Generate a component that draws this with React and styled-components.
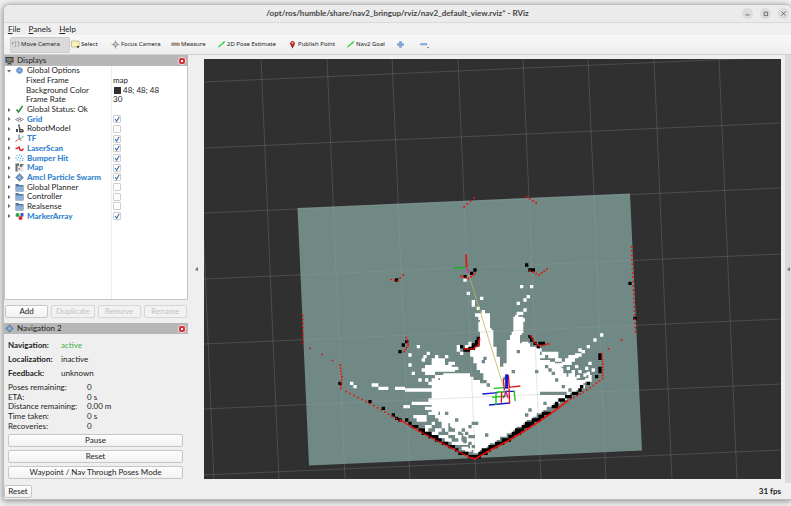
import { useState } from "react";
import styled, { createGlobalStyle } from "styled-components";

const GlobalStyle = createGlobalStyle`
  * {
    box-sizing: border-box;
  }

  body {
    margin: 0;
    background: #f1f1f1;
    color: #222;
    font-family: Lato, "Noto Sans", sans-serif;
    font-size: 8px;
    line-height: 9px;
  }

  button, input {
    font: inherit;
    color: inherit;
    margin: 0;
  }
`;

const TOOLS = [
  { icon: "move", label: "Move Camera", width: 60, active: true },
  { icon: "select", label: "Select", width: 40 },
  { icon: "focus", label: "Focus Camera", width: 60 },
  { icon: "measure", label: "Measure", width: 46 },
  { icon: "arrow", label: "2D Pose Estimate", width: 71 },
  { icon: "pin", label: "Publish Point", width: 58 },
  { icon: "arrow", label: "Nav2 Goal", width: 50 },
  { icon: "plus", title: "Add tool", width: 24 },
  { icon: "minus", title: "Remove tool", width: 20 },
];

const TREE = [
  { icon: "gear", label: "Global Options", open: true },
  { label: "Fixed Frame", value: "map" },
  { label: "Background Color", value: "48; 48; 48", swatch: true },
  { label: "Frame Rate", value: "30" },
  { icon: "ok", label: "Global Status: Ok" },
  { icon: "grid", label: "Grid", checked: true },
  { icon: "robot", label: "RobotModel", checked: false },
  { icon: "tf", label: "TF", checked: true },
  { icon: "laser", label: "LaserScan", checked: true },
  { icon: "cloud", label: "Bumper Hit", checked: true },
  { icon: "map", label: "Map", checked: true },
  { icon: "diamond", label: "Amcl Particle Swarm", checked: true },
  { icon: "folder", label: "Global Planner", checked: false },
  { icon: "folder", label: "Controller", checked: false },
  { icon: "folder", label: "Realsense", checked: false },
  { icon: "markers", label: "MarkerArray", checked: true },
];

const INFO = [
  ["Poses remaining:", "0"],
  ["ETA:", "0 s"],
  ["Distance remaining:", "0.00 m"],
  ["Time taken:", "0 s"],
  ["Recoveries:", "0"],
];

const ICONS = {
  move: (
    <g fill="none" stroke="#8d8d8d">
      <path d="M9 3v11M6.500 5.500L9 3l2.500 2.500M6.500 11.500L9 14l2.500-2.500" />
      <path d="M3 4v5M1 6h4M13 4h3v6l-2 4" strokeWidth="1.500" />
    </g>
  ),
  select: (
    <g>
      <path d="M1 2h15v12H1z" fill="#fbf3b0" stroke="#96906a" />
      <path d="M11 12l6 0-3 5z" fill="#333" />
    </g>
  ),
  focus: (
    <g fill="none" stroke="#8a8a8a" strokeWidth="1.500">
      <circle cx="9" cy="9" r="4" fill="#c7c7c7" />
      <path d="M9 1v5M9 12v5M1 9h5M12 9h5" />
    </g>
  ),
  measure: (
    <g>
      <path d="M1 6h16v5H1z" fill="#bda48e" stroke="#8b7a6c" />
      <path d="M4 6v2M7 6v3M10 6v2M13 6v3" stroke="#6f6258" />
    </g>
  ),
  arrow: <path d="M2 16L4 11 11 6 11 4 17 2 14 7 12 8 6 13z" fill="#27d43b" />,
  pin: (
    <g>
      <path d="M9 17L5 10A5 5 0 1 1 13 10z" fill="#b5302a" />
      <path d="M8 12h2l-1 5z" fill="#4c2422" />
      <circle cx="9" cy="6" r="2" fill="#f1a6a0" />
    </g>
  ),
  plus: <path d="M7 3h4v4h4v4h-4v4H7v-4H3V7h4z" fill="#7ea7d8" stroke="#6690c4" />,
  minus: (
    <g>
      <path d="M1 7h13v3H1z" fill="#86addb" stroke="#6f9bcc" />
      <path d="M14 14h4l-2 3z" fill="#555" />
    </g>
  ),
  screen: (
    <g>
      <path d="M1 2h16v11H1z" fill="#353a40" />
      <path d="M3 4h4v7H3z" fill="#5f86bb" />
      <path d="M7 4h4v7H7z" fill="#69b06c" />
      <path d="M11 4h4v7h-4z" fill="#c16363" />
      <path d="M6 14h6l2 3H4z" fill="#4a4a4a" />
    </g>
  ),
  gear: (
    <g>
      <circle cx="9" cy="9" r="6" fill="#6d9bd0" stroke="#6c98cb" strokeWidth="2" strokeDasharray="2 1" />
      <circle cx="9" cy="9" r="2" fill="#a9c5e6" />
    </g>
  ),
  ok: <path d="M3 9l4 5 8-12" fill="none" stroke="#23883a" strokeWidth="3" />,
  grid: (
    <g fill="none" stroke="#777" strokeWidth="1.500">
      <path d="M1 9l8-4 8 4-8 4zM5 7l8 4M13 7l-8 4" />
    </g>
  ),
  robot: (
    <g fill="#4b4b4b">
      <circle cx="8" cy="3" r="2" />
      <path d="M7 5h3l1 5h5l2 5-3 2H8V11zM2 10h4v6H2z" />
      <path d="M10 13h5" stroke="#ddd" />
    </g>
  ),
  tf: (
    <g fill="none" strokeWidth="2">
      <path d="M8 1v9" stroke="#4d62d8" />
      <path d="M1 15l6-5" stroke="#e04444" />
      <path d="M8 11l5-3 4-4" stroke="#37b556" />
      <path d="M9 11l4 2" stroke="#e04444" />
    </g>
  ),
  laser: <path d="M1 9h3l4-3 2 6 4 1 3-4" fill="none" stroke="#e0242a" strokeWidth="3" />,
  cloud: (
    <g fill="#55aef0">
      {[[4, 3], [9, 2], [13, 5], [2, 8], [7, 7], [11, 9], [5, 12], [10, 14], [15, 13], [16, 9]].map(([x, y]) => (
        <circle key={`${x}-${y}`} cx={x} cy={y} r="1.300" />
      ))}
    </g>
  ),
  map: (
    <g>
      <path d="M1 1h16v16H1z" fill="#e6e6e6" />
      <path d="M1 1h7v5H5v11H1zM10 2h7v3h-3v3h-4z" fill="#707070" />
      <path d="M7 10h3v3H7z" fill="#888" />
    </g>
  ),
  diamond: (
    <g>
      <path d="M9 1l8 8-8 8-8-8z" fill="#7193bb" stroke="#55779d" />
      <path d="M9 6l3 3-3 3-3-3z" fill="#a6c0dc" />
    </g>
  ),
  folder: (
    <g>
      <path d="M1 2h6l1 2h9v13H1z" fill="#52789f" />
      <path d="M2 7h15v9H2z" fill="#8fb1d6" />
    </g>
  ),
  markers: (
    <g>
      <circle cx="5" cy="6" r="4" fill="#27a83a" />
      <path d="M11 2h6v7h-6z" fill="#3b55d0" />
      <circle cx="11" cy="12" r="4" fill="#d8262c" />
    </g>
  ),
};

function Icon({ name }) {
  return (
    <IconBox viewBox="0 0 18 18" aria-hidden="true">
      {ICONS[name]}
    </IconBox>
  );
}

/* Occupancy grid. Coordinates are thirds of a view unit, one cell is 10. */
const CELL = 10;

const FREE_AREAS = [
  [[470, 545], [540, 550], [560, 570], [590, 585], [615, 605], [640, 580], [660, 540], [680, 500], [695, 465], [725, 465], [745, 480], [755, 505], [790, 520], [810, 530], [830, 555], [880, 570], [880, 590], [850, 612], [800, 640], [750, 670], [700, 705], [640, 740], [560, 795], [545, 775], [520, 735], [490, 710], [455, 680], [435, 640], [435, 610], [440, 575]],
  [[565, 375], [600, 375], [608, 440], [618, 480], [630, 520], [642, 540], [642, 610], [610, 610], [595, 580], [570, 545], [548, 510], [532, 475], [570, 470], [572, 430]],
  [[672, 385], [698, 385], [695, 430], [690, 460], [682, 500], [672, 560], [640, 560], [648, 500], [652, 450], [665, 440]],
];

const FREE_RUNS = [
  // left fan
  [183, 580], [193, 588], [252, 585, 2], [272, 595, 3], [320, 593, 3], [350, 600, 9], [372, 640, 8],
  [343, 650, 2], [375, 680, 4], [385, 690, 3], [385, 470], [360, 495], [360, 525], [372, 550], [415, 490],
  [405, 500], [390, 570], [400, 510], [430, 510, 2], [440, 500], [470, 500], [400, 540, 4], [410, 550, 3],
  [420, 530, 4], [430, 520, 2], [450, 530, 3], [480, 520, 2], [470, 530, 2], [490, 535, 2], [440, 540, 3],
  [450, 520, 2], [410, 530, 2], [420, 580, 3], [430, 570, 2], [410, 570, 1], [430, 590, 2], [400, 600, 5],
  [420, 630, 3], [430, 620, 2], [440, 560, 3], [410, 655, 3], [430, 650, 3], [420, 670, 3], [440, 680, 3],
  [410, 710, 2], [430, 700, 1], [450, 690, 3], [400, 720, 2], [420, 730, 3], [440, 720, 2], [460, 710, 2],
  [480, 730, 3], [450, 740, 3], [470, 720, 1], [470, 750, 2], [500, 740, 2], [490, 760, 3], [520, 760, 2],
  [520, 775, 2], [510, 750, 1], [530, 780, 2], [500, 720, 2], [460, 700, 2], [490, 710, 3],
  [460, 510], [450, 510], [470, 540, 3], [430, 610, 2], [430, 660, 3],
  // beams
  [525, 270], [535, 308], [575, 325], [548, 335], [548, 343], [566, 355], [560, 375], [580, 365],
  [588, 375], [588, 382], [570, 385, 2], [570, 398, 2], [568, 410, 2], [570, 420, 3], [580, 430, 3], [580, 440, 3],
  [590, 420, 2], [505, 470], [505, 480], [515, 490], [530, 470, 2], [540, 460, 1],
  [695, 290], [723, 290], [715, 320], [706, 330], [686, 340], [706, 360], [686, 370, 2], [678, 380],
  [678, 390], [698, 390], [686, 400], [680, 410, 2], [678, 420, 2], [670, 430, 3], [665, 440, 3], [700, 460, 2],
  // right fan
  [935, 437], [915, 450], [895, 468], [870, 480], [880, 485], [860, 495, 2], [840, 500, 3], [830, 510, 3],
  [820, 520, 3], [805, 525, 2], [760, 490, 3], [780, 500, 3], [790, 490, 2], [740, 480, 2], [750, 500, 2],
  [815, 540], [835, 535], [860, 530], [850, 545], [870, 545], [890, 535], [840, 555, 2], [865, 560],
  [885, 555], [830, 565], [850, 575, 4], [895, 550], [870, 590, 2], [890, 570, 2], [900, 560], [780, 520, 2],
  [800, 510, 2], [790, 530, 3], [900, 520], [910, 540],
];

const UNKNOWN_RUNS = [
  [550, 700], [520, 720], [540, 710], [530, 730], [510, 730], [540, 740], [520, 745], [550, 740], [540, 760],
  [525, 755], [470, 670], [585, 505], [580, 515], [550, 770], [670, 545], [740, 545], [755, 610, 8], [800, 570],
  [790, 550], [765, 640], [720, 660], [710, 675], [770, 530], [780, 540], [590, 735], [500, 690],
  [560, 700], [820, 590], [840, 600],
];

const WALL_RUNS = [
  [320, 268], [148, 580], [238, 636], [278, 655], [310, 673], [320, 683], [330, 690], [348, 690], [348, 455],
  [338, 465], [330, 485], [526, 260], [545, 250], [555, 240], [711, 223], [720, 242, 2], [1018, 278], [1033, 385],
  [515, 468], [525, 478, 2], [540, 475, 2], [550, 465, 2], [560, 455], [563, 445], [721, 440], [725, 450],
  [735, 460], [750, 458, 2], [745, 468], [930, 495], [930, 505], [930, 535], [930, 545], [922, 558],
  [895, 578], [875, 590], [868, 600], [850, 612, 2], [830, 622, 2], [810, 632, 2], [800, 642], [790, 650, 2],
];

const LEFT_WALL = [[355, 700], [410, 730], [460, 758], [510, 785], [550, 800]];
const RIGHT_WALL = [[560, 798], [600, 772], [650, 745], [690, 718], [720, 697], [770, 665]];

const LASER_LINES = [
  { points: [[330, 690], [400, 730], [450, 757], [500, 782], [540, 802], [555, 806]], step: 6 },
  { points: [[555, 806], [600, 780], [650, 754], [700, 724], [750, 692], [800, 657], [830, 634]], step: 4 },
  { points: [[832, 632], [880, 606], [910, 586], [937, 565]], step: 11 },
  { points: [[937, 565], [938, 530], [935, 490]], step: 8 },
  { points: [[150, 525], [155, 560], [152, 595]], step: 9 },
  { points: [[168, 604], [240, 640], [295, 672], [330, 692]], step: 14 },
  { points: [[60, 475], [96, 493], [127, 511]], step: 36 },
  { points: [[38, 376], [39, 460]], step: 12 },
  { points: [[1024, 170], [1030, 300], [1036, 425]], step: 13 },
  { points: [[348, 442], [354, 465], [342, 484]], step: 8 },
  { points: [[303, 268], [322, 271], [339, 255]], step: 12 },
  { points: [[512, 258], [535, 265], [555, 250]], step: 9 },
  { points: [[522, 50], [551, 24]], step: 13 },
  { points: [[709, 20], [738, 39]], step: 13 },
  { points: [[720, 242], [747, 254], [770, 237]], step: 10 },
  { points: [[525, 477], [550, 476], [567, 462], [568, 445]], step: 6 },
  { points: [[722, 437], [732, 456], [748, 468], [775, 461]], step: 7 },
  { points: [[955, 476], [994, 450]], step: 46 },
];

function inside(x, y, polygon) {
  let hit = false;
  for (let i = 0, j = polygon.length - 1; i < polygon.length; j = i++) {
    const [xi, yi] = polygon[i];
    const [xj, yj] = polygon[j];
    if (yi > y !== yj > y && x < ((xj - xi) * (y - yi)) / (yj - yi) + xi) hit = !hit;
  }
  return hit;
}

function walk(points, step) {
  const out = [];
  for (let i = 1; i < points.length; i++) {
    const [x0, y0] = points[i - 1];
    const [x1, y1] = points[i];
    const count = Math.max(1, Math.round(Math.hypot(x1 - x0, y1 - y0) / step));
    for (let k = 0; k <= count; k++) {
      out.push([x0 + ((x1 - x0) * k) / count, y0 + ((y1 - y0) * k) / count]);
    }
  }
  return out;
}

const square = (x, y, w = CELL, h = CELL) => `M${x} ${y}h${w}v${h}h${-w}z`;

const runsPath = (runs) =>
  runs
    .map(([x, y, n = 1]) => square(Math.round(x / 5) * 5 - 5, Math.round(y / 5) * 5 - 5, n * CELL))
    .join("");

function areasPath(areas) {
  let d = "";
  for (let y = 370; y < 810; y += CELL) {
    for (let x = 380; x < 960; x += CELL) {
      if (areas.some((area) => inside(x + 5, y + 5, area))) d += square(x, y);
    }
  }
  return d;
}

const wallPath = (points, width) =>
  walk(points, 7)
    .map(([x, y]) => square(Math.round(x / CELL) * CELL - 5, Math.round(y / CELL) * CELL - 5, width))
    .join("");

const laserPath = LASER_LINES.map(({ points, step }) =>
  walk(points, step).map(([x, y]) => square(x - 2, y - 2, 5, 5)).join("")
).join("");

const freePath = areasPath(FREE_AREAS) + runsPath(FREE_RUNS);
const blackPath = runsPath(WALL_RUNS) + wallPath(LEFT_WALL, 10) + wallPath(RIGHT_WALL, 18);

const columns = [196, 261, 327, 392, 458, 523, 588, 654, 719, 785];
const rows = [82, 148, 213, 279, 344, 409, 475];

function Scene() {
  return (
    <View viewBox="204 58 577 422" preserveAspectRatio="xMidYMid slice" role="img" aria-label="3D view">
      <path d="M297.500 208L630 193.500 642 450.500 309 465.500z" fill="#708985" />
      <g transform="translate(290 190) scale(.33333)">
        <path d={freePath} fill="#fff" />
        <path d={runsPath(UNKNOWN_RUNS)} fill="#708985" />
      </g>
      <g stroke="#a0a0a4" strokeOpacity=".26" strokeWidth="1">
        {columns.map((x) => (
          <line key={x} x1={x} y1="58" x2={x + 18} y2="480" />
        ))}
        {rows.map((y) => (
          <line key={y} x1="204" y1={y} x2="781" y2={y - 25} />
        ))}
      </g>
      <g transform="translate(290 190) scale(.33333)">
        <path d={blackPath} fill="#000" />
        <path d={laserPath} fill="#e8100c" />
        <g fill="none" strokeWidth="4">
          <path d="M530 233L640 590" stroke="#c2b45c" strokeWidth="3" opacity=".8" />
          <path d="M490 234L528 232" stroke="#19b219" />
          <path d="M528 193L530 232" stroke="#dc1414" strokeWidth="5" />
          <path d="M530 234L536 250" stroke="#c832a0" strokeWidth="5" />
          <path d="M577 612L625 608M597 645L660 639M640 604H673" stroke="#1818d0" />
          <path d="M611 595L655 592M606 622L650 618M618 610V645M672 602L676 633M620 606H650" stroke="#12c512" />
          <path d="M640 566L643 600M655 555L658 592L691 588M635 605L634 638M657 595L659 640" stroke="#dd1515" />
          <path d="M650 553V596" stroke="#1717d6" strokeWidth="9" />
          <path d="M640 625L648 605 655 625" stroke="#c71b9a" />
        </g>
      </g>
    </View>
  );
}

function TreeRow({ item }) {
  const [checked, setChecked] = useState(item.checked);
  const toggle = item.checked !== undefined;
  return (
    <Row>
      <Name as={toggle ? "label" : "span"} htmlFor={toggle ? item.label : undefined} $on={checked}>
        <Expander $hidden={!item.icon} viewBox="0 0 8 8" aria-hidden="true">
          <path d={item.open ? "M0 2h8L4 7z" : "M2 0v8l5-4z"} fill="#666" />
        </Expander>
        {item.icon ? <Icon name={item.icon} /> : <Indent />}
        {item.label}
      </Name>
      <Value>
        {item.swatch && <Swatch />}
        {item.value}
        {toggle && (
          <Check id={item.label} type="checkbox" checked={checked} onChange={() => setChecked(!checked)} />
        )}
      </Value>
    </Row>
  );
}

export default function App() {
  return (
    <>
      <GlobalStyle />
      <Window>
        <TitleBar>
          <Title>/opt/ros/humble/share/nav2_bringup/rviz/nav2_default_view.rviz* - RViz</Title>
          <WindowButtons>
            <RoundButton aria-label="Minimize"><svg viewBox="0 0 10 10"><path d="M2 7h6" /></svg></RoundButton>
            <RoundButton aria-label="Maximize"><svg viewBox="0 0 10 10"><path d="M3 3h5v5H3z" /></svg></RoundButton>
            <RoundButton aria-label="Close"><svg viewBox="0 0 10 10"><path d="M2 2l6 6M8 2L2 8" /></svg></RoundButton>
          </WindowButtons>
        </TitleBar>
        <MenuBar>
          <MenuItem><u>F</u>ile</MenuItem>
          <MenuItem><u>P</u>anels</MenuItem>
          <MenuItem><u>H</u>elp</MenuItem>
        </MenuBar>
        <ToolBar>
          {TOOLS.map(({ icon, label, title, width, active }, i) => (
            <Tool key={i} $width={width} $active={active} aria-label={title}>
              <Icon name={icon} />
              {label}
            </Tool>
          ))}
        </ToolBar>
        <Body>
          <Dock>
            <PanelHeader>
              <Icon name="screen" />
              <PanelTitle>Displays</PanelTitle>
              <CloseButton aria-label="Close Displays" />
            </PanelHeader>
            <Tree>
              <Rows>
                {TREE.map((item) => (
                  <TreeRow key={item.label} item={item} />
                ))}
              </Rows>
            </Tree>
            <DisplayButtons>
              <Button>Add</Button>
              <Button disabled>Duplicate</Button>
              <Button disabled>Remove</Button>
              <Button disabled>Rename</Button>
            </DisplayButtons>
            <PanelHeader>
              <Icon name="diamond" />
              <PanelTitle>Navigation 2</PanelTitle>
              <CloseButton aria-label="Close Navigation 2" />
            </PanelHeader>
            <NavPanel>
              <Status>
                <dt>Navigation:</dt><Active>active</Active>
                <dt>Localization:</dt><dd>inactive</dd>
                <dt>Feedback:</dt><dd>unknown</dd>
              </Status>
              <Info>
                {INFO.map(([name, value]) => (
                  <InfoRow key={name}><dt>{name}</dt><dd>{value}</dd></InfoRow>
                ))}
              </Info>
              <Button>Pause</Button>
              <Button>Reset</Button>
              <Button>Waypoint / Nav Through Poses Mode</Button>
            </NavPanel>
          </Dock>
          <Splitter aria-label="Toggle left panels">
            <svg viewBox="0 0 4 6"><path d="M4 0v6L0 3z" /></svg>
          </Splitter>
          <Scene />
          <RightSplitter aria-label="Toggle right panels">
            <svg viewBox="0 0 4 6"><path d="M4 0v6L0 3z" /></svg>
          </RightSplitter>
        </Body>
        <StatusBar>
          <ResetButton>Reset</ResetButton>
          <Fps>31 fps</Fps>
        </StatusBar>
      </Window>
    </>
  );
}

const Window = styled.main`
  display: flex;
  flex-direction: column;
  height: calc(100vh - 10px);
  min-height: 440px;
  margin: 4px 0 6px 3px;
  background: #efefef;
  border: 1px solid #bdbdbd;
  border-right: 0;
  border-radius: 6px 6px 0 0;
  box-shadow: 0 1px 6px rgba(0, 0, 0, 0.45);
  overflow: hidden;
`;

const TitleBar = styled.header`
  display: grid;
  grid-template-columns: 52px 1fr 52px;
  align-items: center;
  height: 18px;
  flex: none;
  background: #ebebeb;
  border-bottom: 1px solid #d9d9d9;
`;

const Title = styled.h1`
  grid-column: 2;
  margin: 0;
  font-size: 8px;
  font-weight: 700;
  text-align: center;
  color: #444;
`;

const WindowButtons = styled.div`
  display: flex;
  justify-content: flex-end;
  gap: 7px;
  padding-right: 2px;
`;

const RoundButton = styled.button`
  display: grid;
  place-items: center;
  width: 11px;
  height: 11px;
  padding: 0;
  border: 0;
  border-radius: 50%;
  background: #dcdcdc;

  svg {
    width: 7px;
    fill: none;
    stroke: #444;
  }
`;

const MenuBar = styled.nav`
  display: flex;
  align-items: center;
  gap: 8px;
  height: 12px;
  flex: none;
  padding-left: 4px;
`;

const MenuItem = styled.button`
  padding: 0;
  border: 0;
  background: none;
  line-height: 10px;
`;

const ToolBar = styled.div`
  display: flex;
  align-items: center;
  height: 20px;
  flex: none;
  padding: 1px 0 1px 6px;
  background: linear-gradient(#f8f8f8, #eeeeee);
  border-bottom: 1px solid #cfcfcf;
`;

const IconBox = styled.svg`
  width: 9px;
  height: 9px;
  flex: none;
`;

const Tool = styled.button`
  display: flex;
  align-items: center;
  gap: 1px;
  width: ${(props) => props.$width}px;
  height: 16px;
  flex: none;
  padding: 0;
  border: 1px solid ${(props) => (props.$active ? "#cbcbcb" : "transparent")};
  border-radius: 2px;
  background: ${(props) => (props.$active ? "#dadada" : "none")};
  font-family: "Noto Sans", sans-serif;
  font-size: 6px;
  white-space: nowrap;
`;

const Body = styled.div`
  display: flex;
  flex: 1;
  min-height: 0;
`;

const Dock = styled.aside`
  display: flex;
  flex-direction: column;
  width: 184px;
  flex: none;
`;

const PanelHeader = styled.div`
  display: flex;
  align-items: center;
  gap: 3px;
  height: 11px;
  flex: none;
  padding: 0 2px 0 1px;
  background: #b7b7b7;
`;

const PanelTitle = styled.h2`
  flex: 1;
  margin: 0;
  font-size: 8px;
  font-weight: 400;
`;

const CloseButton = styled.button`
  display: grid;
  place-items: center;
  width: 8px;
  height: 8px;
  padding: 0;
  border: 1px solid #f3dada;
  border-radius: 3px;
  background: #d4303a;

  &::after {
    content: "";
    width: 2px;
    height: 2px;
    background: #fff;
  }
`;

const Tree = styled.div`
  flex: 1;
  min-height: 0;
  overflow: hidden;
  border: 1px solid #c4c4c4;
  border-top: 0;
  background: linear-gradient(90deg, #fff 106px, #eee 106px, #eee 107px, #fff 107px);
`;

const Rows = styled.div`
  display: grid;
  grid-auto-rows: 1fr;
  height: 155px;
`;

const Row = styled.div`
  display: grid;
  grid-template-columns: 107px 1fr;
  align-items: center;
  min-height: 0;
`;

const Name = styled.span`
  display: flex;
  align-items: center;
  gap: 3px;
  padding-left: 2px;
  font-weight: ${(props) => (props.$on ? 900 : 400)};
  color: ${(props) => (props.$on ? "#3484d0" : "inherit")};
  white-space: nowrap;
`;

const Expander = styled.svg`
  width: 4px;
  height: 4px;
  margin-right: 1px;
  visibility: ${(props) => (props.$hidden ? "hidden" : "visible")};
`;

const Indent = styled.span`
  width: 8px;
`;

const Value = styled.span`
  display: flex;
  align-items: center;
  gap: 2px;
  padding-left: 1px;
`;

const Swatch = styled.span`
  width: 7px;
  height: 7px;
  margin-left: 1px;
  background: #303030;
`;

const Check = styled.input`
  appearance: none;
  width: 8px;
  height: 8px;
  border: 1px solid #cfcfcf;
  border-radius: 1px;
  background: #fff;

  &:checked {
    background: #fff url("data:image/svg+xml,%3Csvg xmlns='http://www.w3.org/2000/svg' viewBox='0 0 8 8'%3E%3Cpath d='M1.500 4l2 3L7 1' fill='none' stroke='%233b6fae' stroke-width='1.500'/%3E%3C/svg%3E") center / contain no-repeat;
  }
`;

const Button = styled.button`
  height: 13px;
  padding: 0;
  border: 1px solid #c6c6c6;
  border-radius: 2px;
  background: linear-gradient(#fdfdfd, #f1f1f1);
  line-height: 9px;

  &:disabled {
    border-color: #d6d6d6;
    background: #f2f2f2;
    color: #c2c2c2;
  }
`;

const DisplayButtons = styled.div`
  display: grid;
  grid-template-columns: repeat(4, 1fr);
  gap: 3px;
  padding: 5px 1px;
`;

const NavPanel = styled.section`
  display: flex;
  flex-direction: column;
  gap: 3px;
  padding: 4px 5px 4px 4px;
`;

const Status = styled.dl`
  display: grid;
  grid-template-columns: 53px 1fr;
  grid-auto-rows: 14px;
  align-items: center;
  margin: 0;

  dt {
    font-weight: 700;
  }

  dd {
    margin: 0;
  }
`;

const Active = styled.dd`
  color: #3fae3f;
`;

const Info = styled.dl`
  display: grid;
  grid-auto-rows: 1fr;
  height: 48px;
  margin: 0;
`;

const InfoRow = styled.div`
  display: grid;
  grid-template-columns: 79px 1fr;
  align-items: center;
  min-height: 0;

  dd {
    margin: 0;
  }
`;

const Splitter = styled.button`
  display: grid;
  place-items: center;
  width: 16px;
  flex: none;
  padding: 0;
  border: 0;
  background: none;

  svg {
    width: 3px;
    fill: #777;
  }
`;

const RightSplitter = styled(Splitter)`
  width: 6px;
  margin-left: 4px;
  background: #dcdcdc;
`;

const View = styled.svg`
  flex: 1;
  min-width: 0;
  height: auto;
  margin: 4px 0;
  background: #303030;
`;

const StatusBar = styled.footer`
  display: flex;
  align-items: center;
  justify-content: space-between;
  height: 16px;
  flex: none;
  padding: 0 10px 0 0;
`;

const ResetButton = styled(Button)`
  width: 28px;
`;

const Fps = styled.span`
  font-weight: 700;
`;
